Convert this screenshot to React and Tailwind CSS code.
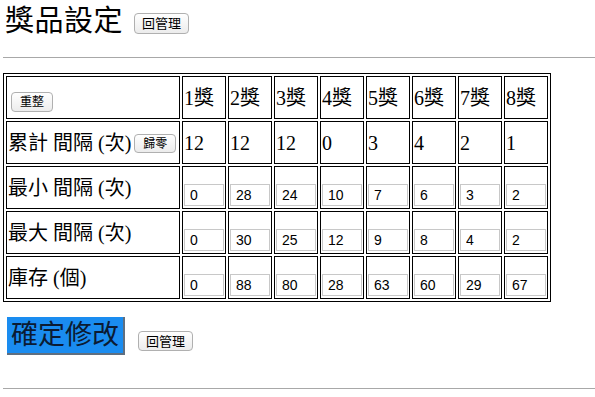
import React from "react";

const serif = "font-['Liberation_Serif','Noto_Sans_CJK_TC',serif]";
const sans = "font-['Liberation_Sans','Noto_Sans_CJK_TC',sans-serif]";

function SmallBtn({ children, className = "" }) {
  return (
    <button
      className={`${sans} inline-flex items-center justify-center rounded-[4px] border border-[#b0b0b0] bg-gradient-to-b from-white to-[#ececec] text-black leading-none ${className}`}
    >
      {children}
    </button>
  );
}

const prizes = ["1獎", "2獎", "3獎", "4獎", "5獎", "6獎", "7獎", "8獎"];
const totals = ["12", "12", "12", "0", "3", "4", "2", "1"];
const rows = [
  { label: "最小 間隔 (次)", vals: ["0", "28", "24", "10", "7", "6", "3", "2"] },
  { label: "最大 間隔 (次)", vals: ["0", "30", "25", "12", "9", "8", "4", "2"] },
  { label: "庫存 (個)", vals: ["0", "88", "80", "28", "63", "60", "29", "67"] },
];

export default function App() {
  return (
    <div className={`${serif} bg-white text-black w-[595px] h-[397px] overflow-hidden pl-[3px] pt-[3px]`}>
      <div className="flex items-center pl-[2px] h-[36px]">
        <h1 className="text-[29px] leading-[36px] tracking-[0.5px]">獎品設定</h1>
        <SmallBtn className="ml-[11px] mt-[5px] w-[55px] h-[21px] text-[13px]">回管理</SmallBtn>
      </div>
      <div className="mt-[18px] border-t border-[#a8a8a8]" />
      <table className="mt-[15px] table-fixed border-separate border-spacing-[2px] border border-black w-[548px]">
        <colgroup>
          <col className="w-[174px]" />
          {prizes.map((p) => (
            <col key={p} className="w-[44px]" />
          ))}
        </colgroup>
        <tbody>
          <tr className="h-[43px]">
            <td className="border border-black align-bottom p-0 pl-[4px] pb-[5px]">
              <SmallBtn className="w-[42px] h-[20px] text-[12px]">重整</SmallBtn>
            </td>
            {prizes.map((p) => (
              <td key={p} className="border border-black align-middle px-[1px] text-[20px] leading-[24px] whitespace-nowrap">
                {p}
              </td>
            ))}
          </tr>
          <tr className="h-[43px]">
            <td className="border border-black align-middle px-[1px] text-[20px] leading-[24px] whitespace-nowrap">
              <span className="inline-flex items-center">
                累計 間隔 (次)
                <SmallBtn className="ml-[3px] mt-[2px] w-[42px] h-[19px] text-[12px]">歸零</SmallBtn>
              </span>
            </td>
            {totals.map((t, i) => (
              <td key={i} className="border border-black align-middle px-[1px] text-[20px] leading-[24px]">
                {t}
              </td>
            ))}
          </tr>
          {rows.map((r) => (
            <tr key={r.label} className="h-[43px]">
              <td className="border border-black align-middle px-[1px] text-[20px] leading-[24px] whitespace-nowrap">
                {r.label}
              </td>
              {r.vals.map((v, i) => (
                <td key={i} className="border border-black align-bottom p-[1px] pb-[2px]">
                  <input
                    readOnly
                    value={v}
                    className={`${sans} block w-[40px] h-[22px] border border-[#c8c8c8] px-[5px] text-[14px] text-black bg-white outline-none`}
                  />
                </td>
              ))}
            </tr>
          ))}
        </tbody>
      </table>
      <div className="mt-[15px] flex items-end pl-[4px]">
        <button
          className={`${sans} w-[118px] h-[38px] bg-[#1a8cf0] text-[#0b1b33] text-[27px] leading-none border-r-2 border-b-2 border-[#5f6f80]`}
        >
          確定修改
        </button>
        <SmallBtn className="ml-[13px] mb-[4px] w-[55px] h-[20px] text-[13px]">回管理</SmallBtn>
      </div>
      <div className="mt-[33px] border-t border-[#a8a8a8]" />
    </div>
  );
}
